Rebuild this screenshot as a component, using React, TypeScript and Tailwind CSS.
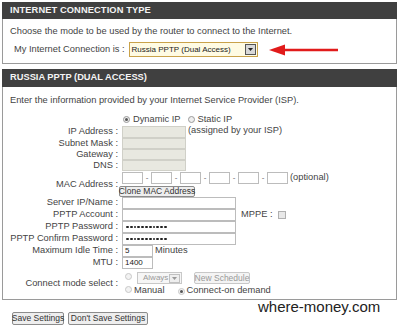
const font = "font-['Liberation_Sans',Arial,sans-serif]";

const Radio = ({ checked = false, dim = false }: { checked?: boolean; dim?: boolean }) => (
  <span
    className={`inline-flex items-center justify-center w-[7px] h-[7px] rounded-full border ${
      dim ? "border-[#c8c8c8] bg-[#f2f2f2]" : "border-[#9a9a9a] bg-[#eeeeee]"
    }`}
  >
    {checked && <span className="w-[3px] h-[3px] rounded-full bg-[#555]" />}
  </span>
);

const Row = ({ label, h = 12, children }: { label: string; h?: number; children?: React.ReactNode }) => (
  <div className="flex items-center" style={{ height: h }}>
    <div className="w-[116px] pr-[1px] text-right whitespace-nowrap">{label}</div>
    <div className="ml-[3px] flex items-center h-full">{children}</div>
  </div>
);

const GrayBox = () => <div className="w-[64px] h-full border border-[#d0d0c8] bg-[#e8e8e0]" />;

const TextBox = ({ w, value = "" }: { w: number; value?: string }) => (
  <div
    className="h-full border border-[#bcbcbc] bg-white flex items-center pl-[2px] text-[8px] text-[#222] leading-none"
    style={{ width: w }}
  >
    {value}
  </div>
);

const PasswordBox = () => (
  <div className="w-[114px] h-full border border-[#bcbcbc] bg-white flex items-center pl-[3px] gap-[1px]">
    {Array.from({ length: 11 }).map((_, i) => (
      <span key={i} className="w-[2.8px] h-[2.8px] rounded-full bg-[#222]" />
    ))}
  </div>
);

const OldButton = ({ children, w, dim = false }: { children: React.ReactNode; w: number; dim?: boolean }) => (
  <div
    className={`h-full flex items-center justify-center border rounded-[2px] text-[8.5px] leading-none whitespace-nowrap ${
      dim ? "border-[#c8c8c8] bg-[#f4f4f4] text-[#999]" : "border-[#8c8c8c] bg-[#eeeeee] text-[#333]"
    }`}
    style={{ width: w }}
  >
    {children}
  </div>
);

export default function App() {
  const macFields = [0, 1, 2, 3, 4, 5];
  return (
    <div className={`${font} relative w-[399px] h-[327px] bg-white text-[9.3px] text-[#444] leading-none overflow-hidden`}>
      {/* connection type panel */}
      <div className="ml-[2px] mt-[2px] w-[395px]">
        <div className="h-[17px] bg-[#404040] flex items-center pl-[8px] text-[#f4f4f4] font-bold tracking-[0.1px]">
          INTERNET CONNECTION TYPE
        </div>
        <div className="h-[45px] border-x border-b border-[#9a9a9a] pl-[7px]">
          <div className="pt-[8px]">Choose the mode to be used by the router to connect to the Internet.</div>
          <div className="mt-[6px] flex items-center h-[15px]">
            <span className="ml-[4px]">My Internet Connection is :</span>
            <div className="ml-[4px] w-[129px] h-full border border-[#c9a24a] bg-[#fffbe3] flex items-center justify-between pl-[2px] pr-[1px]">
              <span className="text-[8px] text-[#222]">Russia PPTP (Dual Access)</span>
              <span className="w-[11px] h-[11px] border border-[#555] bg-[#d8d8d8] flex items-center justify-center">
                <svg width="5" height="3" viewBox="0 0 5 3">
                  <path d="M0 0h5L2.5 3z" fill="#222" />
                </svg>
              </span>
            </div>
            <svg className="ml-[11px]" width="70" height="12" viewBox="0 0 70 12">
              <path d="M6 6H69" stroke="#e11b1b" strokeWidth="2.5" />
              <path d="M0 6L16 0.5V11.5Z" fill="#e11b1b" />
            </svg>
          </div>
        </div>
      </div>

      {/* pptp panel */}
      <div className="ml-[2px] mt-[5px] w-[395px]">
        <div className="h-[18px] bg-[#404040] flex items-center pl-[8px] text-[#f4f4f4] font-bold">
          RUSSIA PPTP (DUAL ACCESS)
        </div>
        <div className="h-[213px] border-x border-b border-[#9a9a9a]">
          <div className="pt-[9px] pl-[7px] h-[20px]">
            Enter the information provided by your Internet Service Provider (ISP).
          </div>
          <div className="mt-[7px] h-[12px] flex items-center">
            <div className="ml-[120px] flex items-center gap-[3px]">
              <Radio checked />
              <span>Dynamic IP</span>
            </div>
            <div className="ml-[7px] flex items-center gap-[3px]">
              <Radio />
              <span>Static IP</span>
            </div>
          </div>
          <Row label="IP Address :">
            <GrayBox />
            <span className="ml-[2px] -mt-[2px]">(assigned by your ISP)</span>
          </Row>
          <Row label="Subnet Mask :" h={11}>
            <GrayBox />
          </Row>
          <Row label="Gateway :" h={11}>
            <GrayBox />
          </Row>
          <Row label="DNS :" h={11}>
            <GrayBox />
          </Row>
          <div className="flex items-center h-[25px] mt-[1px]">
            <div className="w-[116px] pr-[1px] text-right">MAC Address :</div>
            <div className="flex flex-col h-full">
              <div className="flex items-center h-[12px] ml-[3px]">
                {macFields.map((i) => (
                  <div key={i} className="flex items-center h-full">
                    {i > 0 && <span className="w-[8px] text-center text-[#666] text-[8px]">-</span>}
                    <div className="w-[21px] h-full border border-[#bcbcbc] bg-white" />
                  </div>
                ))}
                <span className="ml-[2px]">(optional)</span>
              </div>
              <div className="h-[11px] mt-[2px]">
                <OldButton w={76}>Clone MAC Address</OldButton>
              </div>
            </div>
          </div>
          <Row label="Server IP/Name :">
            <TextBox w={114} />
          </Row>
          <Row label="PPTP Account :">
            <TextBox w={114} />
            <span className="ml-[5px]">MPPE :</span>
            <span className="ml-[5px] w-[8px] h-[8px] border border-[#b0b0b0] bg-[#e8e8e8]" />
          </Row>
          <Row label="PPTP Password :">
            <PasswordBox />
          </Row>
          <Row label="PPTP Confirm Password :">
            <PasswordBox />
          </Row>
          <Row label="Maximum Idle Time :">
            <TextBox w={31} value="5" />
            <span className="ml-[2px]">Minutes</span>
          </Row>
          <Row label="MTU :">
            <TextBox w={31} value="1400" />
          </Row>
          <div className="flex items-center h-[27px] mt-[1px]">
            <div className="w-[116px] pr-[1px] text-right">Connect mode select :</div>
            <div className="ml-[3px] flex flex-col h-full">
              <div className="flex items-center h-[12px] mt-[2px]">
                <span className="ml-[3px]">
                  <Radio dim />
                </span>
                <div className="ml-[5px] w-[45px] h-full border border-[#c8c8c8] bg-[#f6f6f6] flex items-center justify-between pl-[5px] pr-[1px]">
                  <span className="text-[8px] text-[#999]">Always</span>
                  <span className="w-[11px] h-[9px] border border-[#c0c0c0] bg-[#eeeeee] flex items-center justify-center">
                    <svg width="5" height="3" viewBox="0 0 5 3">
                      <path d="M0 0h5L2.5 3z" fill="#999" />
                    </svg>
                  </span>
                </div>
                <div className="ml-[12px] h-full">
                  <OldButton w={56} dim>
                    New Schedule
                  </OldButton>
                </div>
              </div>
              <div className="flex items-center h-[12px] mt-[1px]">
                <span className="ml-[3px]">
                  <Radio dim />
                </span>
                <span className="ml-[2px]">Manual</span>
                <span className="ml-[13px]">
                  <Radio checked dim />
                </span>
                <span className="ml-[2px]">Connect-on demand</span>
              </div>
            </div>
          </div>
        </div>
      </div>

      {/* bottom buttons */}
      <div className="mt-[12px] ml-[12px] flex gap-[4px] h-[13px]">
        <OldButton w={52}>Save Settings</OldButton>
        <OldButton w={80}>Don't Save Settings</OldButton>
      </div>

      <div className="absolute left-[258px] top-[299px] text-[15px] text-[#222] leading-none">where-money.com</div>
    </div>
  );
}
